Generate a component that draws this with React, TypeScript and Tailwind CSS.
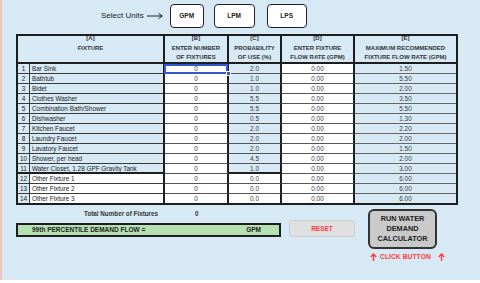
import React from "react";

const rows: [string, string, string][] = [
  ["Bar Sink", "2.0", "1.50"],
  ["Bathtub", "1.0", "5.50"],
  ["Bidet", "1.0", "2.00"],
  ["Clothes Washer", "5.5", "3.50"],
  ["Combination Bath/Shower", "5.5", "5.50"],
  ["Dishwasher", "0.5", "1.30"],
  ["Kitchen Faucet", "2.0", "2.20"],
  ["Laundry Faucet", "2.0", "2.00"],
  ["Lavatory Faucet", "2.0", "1.50"],
  ["Shower, per head", "4.5", "2.00"],
  ["Water Closet, 1.28 GPF Gravity Tank", "1.0", "3.00"],
  ["Other Fixture 1", "0.0", "6.00"],
  ["Other Fixture 2", "0.0", "6.00"],
  ["Other Fixture 3", "0.0", "6.00"],
];

const BLUE = "bg-[#d6e9f5]";

function UpArrow() {
  return (
    <svg width="7" height="8" viewBox="0 0 7 8">
      <path d="M3.5 8 L3.5 1.5" stroke="#ff3b3b" strokeWidth="1.4" />
      <path d="M0.8 4 L3.5 1 L6.2 4" fill="none" stroke="#ff3b3b" strokeWidth="1.4" />
    </svg>
  );
}

export default function App() {
  return (
    <div
      className="w-[480px] h-[283px] bg-white overflow-hidden"
      style={{ fontFamily: '"Liberation Sans", Arial, sans-serif' }}
    >
      <div className={`h-[280px] ${BLUE} border-l-2 border-[#f2c4ba]`}>
        {/* units row */}
        <div className="flex items-center pt-[4px] pl-[99px] h-[28px]">
          <span className="text-[8px] text-[#222] leading-none">Select Units</span>
          <svg width="17" height="8" viewBox="0 0 17 8" className="ml-[3px]">
            <line x1="0" y1="4" x2="15" y2="4" stroke="#222" strokeWidth="1" />
            <path d="M11.5 1.5 L15.5 4 L11.5 6.5" fill="none" stroke="#222" strokeWidth="1" />
          </svg>
          <button className="ml-[6px] w-[34px] h-[24px] bg-white border-[1.5px] border-[#222] rounded-[4px] text-[6.5px] font-bold text-[#222] flex items-center justify-center">
            GPM
          </button>
          <button className="ml-[10px] w-[41px] h-[24px] bg-white border-[1.5px] border-[#222] rounded-[4px] text-[6.5px] font-bold text-[#222] flex items-center justify-center">
            LPM
          </button>
          <button className="ml-[12px] w-[40px] h-[24px] bg-white border-[1.5px] border-[#222] rounded-[4px] text-[6.5px] font-bold text-[#222] flex items-center justify-center">
            LPS
          </button>
        </div>

        {/* table */}
        <div className="ml-[14px] mt-[6px] w-[442px] border-2 border-[#1e1e1e] box-border">
          {/* header */}
          <div className="flex h-[28px] border-b-2 border-[#1e1e1e] box-border text-[6px] font-bold text-[#333] leading-[9.5px] text-center">
            <div className="w-[147px] border-r-2 border-[#1e1e1e] box-border flex flex-col items-center -mt-[2px]">
              <span>[A]</span>
              <span>FIXTURE</span>
            </div>
            <div className="w-[64px] border-r-2 border-[#1e1e1e] box-border flex flex-col items-center -mt-[2px]">
              <span>[B]</span>
              <span>ENTER NUMBER</span>
              <span>OF FIXTURES</span>
            </div>
            <div className="w-[53px] border-r-2 border-[#1e1e1e] box-border flex flex-col items-center -mt-[2px]">
              <span>[C]</span>
              <span>PROBABILITY</span>
              <span>OF USE (%)</span>
            </div>
            <div className="w-[73px] border-r-2 border-[#1e1e1e] box-border flex flex-col items-center -mt-[2px]">
              <span>[D]</span>
              <span>ENTER FIXTURE</span>
              <span>FLOW RATE (GPM)</span>
            </div>
            <div className="flex-1 flex flex-col items-center -mt-[2px]">
              <span>[E]</span>
              <span>MAXIMUM RECOMMENDED</span>
              <span>FIXTURE FLOW RATE (GPM)</span>
            </div>
          </div>

          {rows.map(([name, prob, maxf], i) => {
            const last = i === rows.length - 1;
            const row11 = i === 10;
            const other = i >= 11;
            const hb = last ? "h-[9px]" : "h-[10px] border-b";
            const thickB = row11 ? "border-b-2 border-b-[#1e1e1e]" : "";
            return (
              <div key={i} className="flex text-[6.4px] leading-[9px] text-[#3a3a3a]">
                <div
                  className={`w-[12px] ${BLUE} ${hb} border-r border-[#3a3a3a] box-border text-center text-[#222] ${thickB}`}
                >
                  {i + 1}
                </div>
                <div
                  className={`w-[135px] ${other ? "bg-white" : BLUE} ${hb} border-r-2 border-[#3a3a3a] border-r-[#1e1e1e] box-border pl-[2px] text-[#222] whitespace-nowrap ${thickB}`}
                >
                  {name}
                </div>
                <div
                  className={`relative w-[64px] bg-white ${hb} border-r-2 border-[#555] border-r-[#1e1e1e] box-border text-center`}
                >
                  {i === 0 && (
                    <>
                      <span className="absolute z-10 -left-[1px] top-0 w-[64px] h-[10px] border-2 border-solid border-[#3556d6] box-border block" />
                      <span className="absolute z-20 -right-[4px] top-[7px] w-[5px] h-[5px] bg-[#3556d6] border border-white box-border block" />
                    </>
                  )}
                  0
                </div>
                <div
                  className={`w-[53px] ${other ? "bg-white" : BLUE} ${hb} border-r-2 border-[#555] border-r-[#1e1e1e] box-border text-center ${thickB}`}
                >
                  {prob}
                </div>
                <div
                  className={`w-[73px] bg-white ${hb} border-r-2 border-[#555] border-r-[#1e1e1e] box-border text-center`}
                >
                  0.00
                </div>
                <div className={`flex-1 ${BLUE} ${hb} border-[#666] box-border text-center`}>{maxf}</div>
              </div>
            );
          })}
        </div>

        {/* bottom area */}
        <div className="flex items-start ml-[14px]">
          <div className="w-[265px] flex flex-col">
            <div className="flex items-center h-[10px] mt-[4px] text-[6.3px] font-bold text-[#333]">
              <span className="ml-[68px]">Total Number of Fixtures</span>
              <span className="ml-[37px]">0</span>
            </div>
            <div className="mt-[4px] h-[14px] bg-[#b6e0b2] border-2 border-[#1e1e1e] box-border flex items-center text-[6.5px] font-bold text-[#222]">
              <span className="ml-[14px]">99th PERCENTILE DEMAND FLOW =</span>
              <span className="ml-[101px]">GPM</span>
            </div>
          </div>
          <button className="ml-[8px] mt-[15px] w-[66px] h-[17px] bg-[#e0e0e0] border border-[#cdcdcd] rounded-[3px] text-[6.5px] font-bold text-[#ff3b3b] flex items-center justify-center">
            RESET
          </button>
          <div className="ml-[13px] mt-[4px] flex flex-col">
            <button className="w-[69px] h-[40px] bg-[#c9c9c9] border-2 border-[#333] rounded-[6px] text-[7.3px] font-bold text-[#222] leading-[9.8px] flex flex-col items-center justify-center">
              <span>RUN WATER</span>
              <span>DEMAND</span>
              <span>CALCULATOR</span>
            </button>
            <div className="mt-[3px] ml-[2px] flex items-center text-[6.8px] font-bold text-[#ff3b3b] whitespace-nowrap">
              <UpArrow />
              <span className="ml-[3px]">CLICK BUTTON</span>
              <span className="ml-[7px] flex">
                <UpArrow />
              </span>
            </div>
          </div>
        </div>
      </div>
    </div>
  );
}
